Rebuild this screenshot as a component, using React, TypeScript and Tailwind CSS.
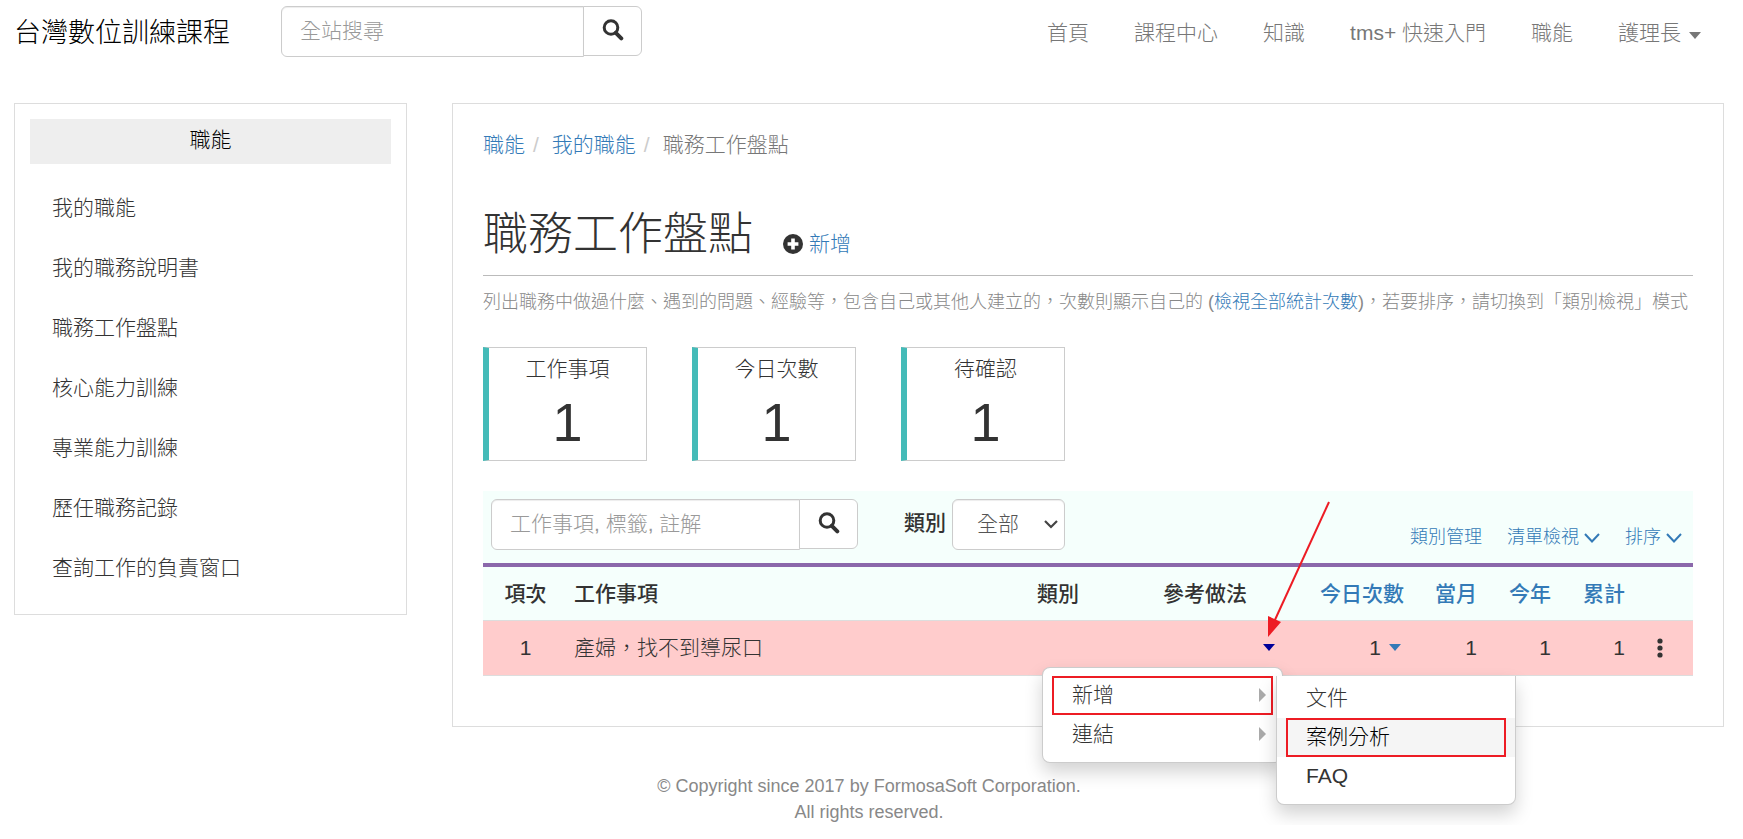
import { type ReactNode } from 'react';
import { clsx } from 'clsx';

const navItems = ['首頁', '課程中心', '知識', 'tms+ 快速入門', '職能'];

const sidebarItems = [
    '我的職能',
    '我的職務說明書',
    '職務工作盤點',
    '核心能力訓練',
    '專業能力訓練',
    '歷任職務記錄',
    '查詢工作的負責窗口',
];

const stats = [
    { label: '工作事項', value: 1 },
    { label: '今日次數', value: 1 },
    { label: '待確認', value: 1 },
];

const SearchIcon = () => (
    <svg viewBox="0 0 22 22" className="h-[22px] w-[22px]" fill="none" stroke="#333" aria-hidden="true">
        <circle cx="9" cy="8.5" r="6.8" strokeWidth="3" />
        <path d="M13.8 13.8 19.3 19.3" strokeWidth="4" strokeLinecap="round" />
    </svg>
);

const PlusIcon = () => (
    <svg viewBox="0 0 20 20" className="h-5 w-5" aria-hidden="true">
        <circle cx="10" cy="10" r="10" fill="#333" />
        <path d="M8.2 4.6h3.6v3.6h3.6v3.6h-3.6v3.6H8.2v-3.6H4.6V8.2h3.6z" fill="#fff" />
    </svg>
);

const ChevronDown = () => (
    <svg viewBox="0 0 16 10" className="h-[10px] w-4" fill="none" stroke="currentColor" strokeWidth="2" aria-hidden="true">
        <path d="M1 1l7 7.500 7-7.500" />
    </svg>
);

const Caret = ({ className }: { className?: string }) => (
    <svg viewBox="0 0 12 7" className={clsx('h-[7px] w-3', className)} fill="currentColor" aria-hidden="true">
        <path d="M0 0h12L6 7z" />
    </svg>
);

const SearchBox = ({ label, placeholder, inputClass }: { label: string; placeholder: string; inputClass: string }) => (
    <form className="flex items-start" onSubmit={(e) => e.preventDefault()}>
        <input
            type="text"
            aria-label={label}
            placeholder={placeholder}
            className={clsx(
                'h-[51px] rounded-l-md border border-[#ccc] bg-white px-[18px] pb-[2px] text-[21px] shadow-[inset_0_1px_1px_rgba(0,0,0,0.075)] placeholder:text-[#999]',
                inputClass
            )}
        />
        <button
            type="submit"
            aria-label="搜尋"
            className="-ml-px flex h-[50px] w-[59px] items-center justify-center rounded-r-md border border-[#ccc] bg-white pb-[2px]"
        >
            <SearchIcon />
        </button>
    </form>
);

const MenuItem = ({ children, active, marked, hasSub }: { children: ReactNode; active?: boolean; marked?: boolean; hasSub?: boolean }) => (
    <li className={clsx('flex h-[39px] px-[9px]', active && 'bg-[#f5f5f5]')}>
        <a
            href="#"
            className={clsx(
                'flex flex-1 items-center justify-between border-2 pr-[5px] pl-[18px]',
                marked ? 'border-[#ed1c24]' : 'border-transparent',
                active ? 'text-black' : 'text-[#333]'
            )}
        >
            {children}
            {hasSub && (
                <svg viewBox="0 0 7 14" className="h-[14px] w-[7px]" fill="#aaa" aria-hidden="true">
                    <path d="M0 0l7 7-7 7z" />
                </svg>
            )}
        </a>
    </li>
);

const Header = () => (
    <header className="flex items-start justify-between pt-[6px] pr-[23px]">
        <div className="flex">
            <a href="#" className="w-[267px] text-[27px] leading-[54px] text-black">
                台灣數位訓練課程
            </a>
            <SearchBox label="全站搜尋" placeholder="全站搜尋" inputClass="w-[303px]" />
        </div>
        <nav className="flex gap-[45px] text-[21px] leading-[54px] text-[#777]">
            {navItems.map((item) => (
                <a key={item} href="#">
                    {item}
                </a>
            ))}
            <button type="button" className="flex items-center gap-2">
                護理長
                <Caret className="mt-1" />
            </button>
        </nav>
    </header>
);

const Sidebar = () => (
    <aside className="w-[393px] shrink-0 border border-[#ddd] p-[15px]">
        <h2 className="bg-[#eee] pb-[3px] text-center text-[21px] leading-[42px] text-black">職能</h2>
        <ul className="mt-[14px] pb-px pl-[22px] text-[21px] leading-[60px]">
            {sidebarItems.map((item) => (
                <li key={item}>
                    <a href="#">{item}</a>
                </li>
            ))}
        </ul>
    </aside>
);

const RowMenu = () => (
    <div className="absolute top-[46px] right-[-8px] z-10 w-[241px] rounded-lg border border-black/20 bg-white py-2 text-left shadow-[0_9px_18px_rgba(0,0,0,0.175)]">
        <ul>
            <MenuItem marked hasSub>
                新增
            </MenuItem>
            <MenuItem hasSub>連結</MenuItem>
        </ul>
        <ul className="absolute top-2 left-[233px] w-[240px] rounded-b-lg border border-t-0 border-black/20 bg-white pt-[3px] pb-2 shadow-[0_9px_18px_rgba(0,0,0,0.175)]">
            <MenuItem>文件</MenuItem>
            <MenuItem active marked>
                案例分析
            </MenuItem>
            <MenuItem>FAQ</MenuItem>
        </ul>
    </div>
);

const JobTable = () => (
    <table className="w-full table-fixed border-b border-[#ddd] text-[21px]">
        <colgroup>
            <col className="w-[85px]" />
            <col />
            <col className="w-[154px]" />
            <col className="w-[140px]" />
            <col className="w-[136px]" />
            <col className="w-[73px]" />
            <col className="w-[74px]" />
            <col className="w-[74px]" />
            <col className="w-[61px]" />
        </colgroup>
        <thead>
            <tr className="h-[53px] border-b border-[#ddd] bg-[#f5fffc] [&>th]:font-medium">
                <th scope="col">項次</th>
                <th scope="col" className="pl-[6px] text-left">工作事項</th>
                <th scope="col">類別</th>
                <th scope="col">參考做法</th>
                {['今日次數', '當月', '今年', '累計'].map((name) => (
                    <th key={name} scope="col" className="pr-[7px] text-right text-[#337ab7]">
                        <a href="#">{name}</a>
                    </th>
                ))}
                <td />
            </tr>
        </thead>
        <tbody>
            <tr className="h-[55px] bg-[#fcc]">
                <td className="text-center">1</td>
                <td className="pl-[6px]">產婦，找不到導尿口</td>
                <td />
                <td className="relative">
                    <button type="button" aria-label="參考做法選單" className="ml-auto block text-[#009]">
                        <Caret />
                    </button>
                    <RowMenu />
                    {/* Pointer from the toolbar down to the caret */}
                    <svg viewBox="0 0 64 138" className="absolute bottom-[37px] left-[131px] z-20 h-[138px] w-16" aria-hidden="true">
                        <path d="M63 2L8 122" stroke="#ed1c24" strokeWidth="2" />
                        <path d="M2 137V116l13 6z" fill="#ed1c24" />
                    </svg>
                </td>
                <td className="pr-[10px]">
                    <div className="flex items-center justify-end gap-2">
                        1
                        <button type="button" aria-label="今日次數選單" className="text-[#337ab7]">
                            <Caret />
                        </button>
                    </div>
                </td>
                <td className="pr-[7px] text-right">1</td>
                <td className="pr-[7px] text-right">1</td>
                <td className="pr-[7px] text-right">1</td>
                <td className="pr-[6px]">
                    <button type="button" aria-label="更多" className="mx-auto block">
                        <svg viewBox="0 0 6 20" className="h-5 w-[6px]" fill="#333" aria-hidden="true">
                            <circle cx="3" cy="3" r="2.600" />
                            <circle cx="3" cy="10" r="2.600" />
                            <circle cx="3" cy="17" r="2.600" />
                        </svg>
                    </button>
                </td>
            </tr>
        </tbody>
    </table>
);

const Toolbar = () => (
    <div className="flex items-start justify-between border-b-4 border-[#8b68ab] bg-[#f5fffc] pt-2 pr-[11px] pb-3 pl-2">
        <div className="flex items-start">
            <SearchBox label="搜尋工作事項" placeholder="工作事項, 標籤, 註解" inputClass="w-[309px]" />
            <label htmlFor="category" className="ml-[46px] pr-[6px] text-[21px] leading-[48px] font-medium">
                類別
            </label>
            <div className="relative">
                <select
                    id="category"
                    className="h-[51px] w-[113px] appearance-none rounded-md border border-[#ccc] bg-white pb-[2px] pl-6 text-[21px] text-[#555] shadow-[inset_0_1px_1px_rgba(0,0,0,0.075)]"
                >
                    <option>全部</option>
                </select>
                <svg viewBox="0 0 14 9" className="pointer-events-none absolute top-[21px] right-[7px] h-[9px] w-[14px]" fill="none" stroke="#444" strokeWidth="2.200" aria-hidden="true">
                    <path d="M1 1l6 6 6-6" />
                </svg>
            </div>
        </div>
        <div className="flex gap-[25px] pt-[25px] text-[18px] leading-[27px] text-[#337ab7]">
            <a href="#">類別管理</a>
            <button type="button" className="flex items-center gap-[5px]">
                清單檢視
                <ChevronDown />
            </button>
            <button type="button" className="flex items-center gap-[5px]">
                排序
                <ChevronDown />
            </button>
        </div>
    </div>
);

export default function App() {
    return (
        <div className="bg-white pr-[19px] pl-[14px] font-['Liberation_Sans','Noto_Sans_CJK_TC',sans-serif] font-light text-[#333]">
            <Header />
            <div className="mt-[43px] flex items-start gap-[45px]">
                <Sidebar />
                <main className="min-w-0 flex-1 border border-[#ddd] px-[30px] pt-[26px] pb-[50px]">
                    <ol className="flex text-[21px] leading-[30px] text-[#777]">
                        <li>
                            <a href="#" className="text-[#337ab7]">職能</a>
                            <span className="pr-[13px] pl-2 text-[#ccc]">/</span>
                        </li>
                        <li>
                            <a href="#" className="text-[#337ab7]">我的職能</a>
                            <span className="pr-[13px] pl-2 text-[#ccc]">/</span>
                        </li>
                        <li>職務工作盤點</li>
                    </ol>
                    <div className="mt-[45px] flex items-end border-b border-[#bbb] pb-[10px]">
                        <h1 className="text-[45px] leading-[60px]">職務工作盤點</h1>
                        <a href="#" className="ml-[30px] flex items-center gap-[6px] pb-[5px] text-[21px] leading-[32px] text-[#337ab7]">
                            <PlusIcon />
                            新增
                        </a>
                    </div>
                    <p className="pt-3 text-[18px] leading-[28px] text-[#888]">
                        列出職務中做過什麼、遇到的問題、經驗等，包含自己或其他人建立的，次數則顯示自己的 (
                        <a href="#" className="text-[#337ab7]">檢視全部統計次數</a>
                        )，若要排序，請切換到「類別檢視」模式
                    </p>
                    <div className="mt-[31px] flex gap-[45px]">
                        {stats.map((stat) => (
                            <div key={stat.label} className="h-[114px] w-[164px] border border-l-[6px] border-[#ccc] border-l-[#44bbb8] pt-[6px] text-center">
                                <div className="text-[21px] leading-[30px]">{stat.label}</div>
                                <div className="mt-2 text-[54px] leading-[60px]">{stat.value}</div>
                            </div>
                        ))}
                    </div>
                    <div className="mt-[30px]">
                        <Toolbar />
                        <JobTable />
                    </div>
                </main>
            </div>
            <footer className="mt-[46px] text-center text-[18px] leading-[26px] text-[#888]">
                <p>© Copyright since 2017 by FormosaSoft Corporation.</p>
                <p>All rights reserved.</p>
            </footer>
        </div>
    );
}
